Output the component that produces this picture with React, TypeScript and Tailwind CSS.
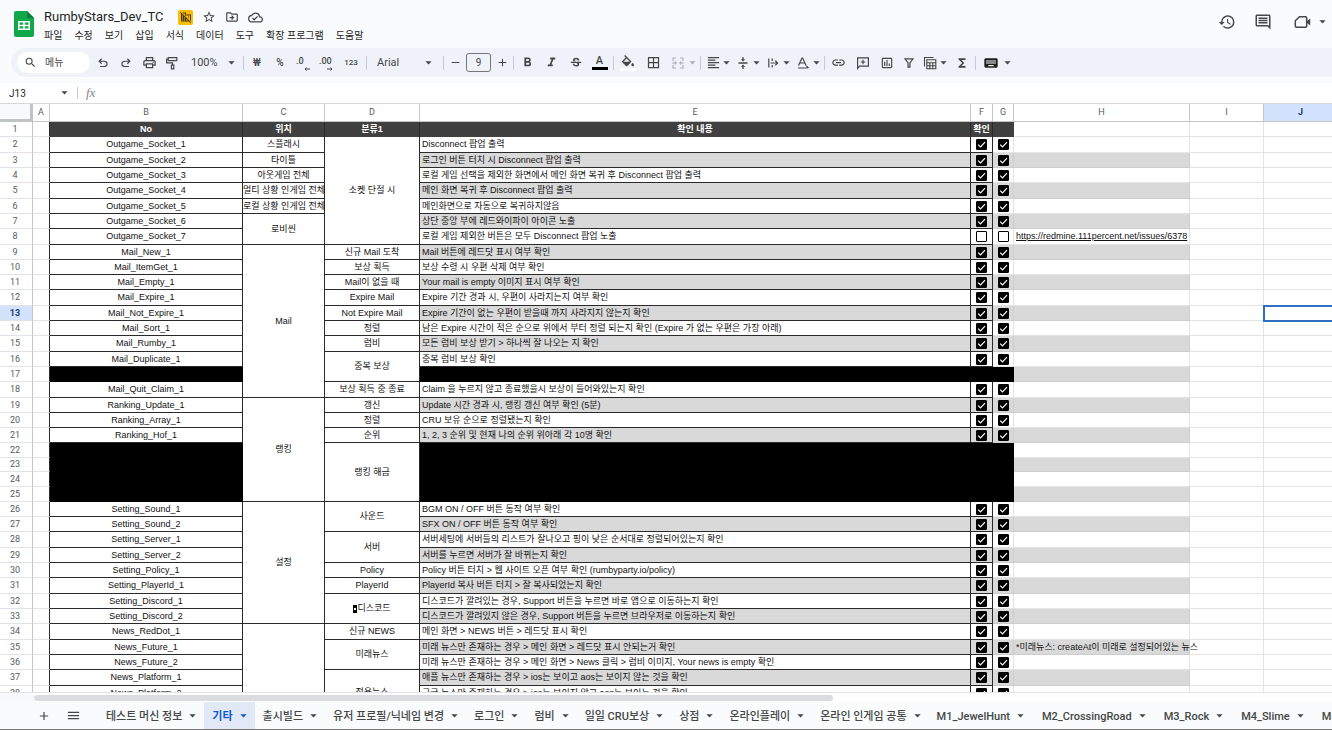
import React from "react";
import {
  MdAdd,
  MdBorderAll,
  MdDomainDisabled,
  MdFormatAlignLeft,
  MdFormatBold,
  MdFormatItalic,
  MdFunctions,
  MdHistory,
  MdKeyboard,
  MdLink,
  MdMenu,
  MdOutlineCloudDone,
  MdOutlineComment,
  MdOutlineDriveFileMove,
  MdOutlineInsertChart,
  MdOutlinePrint,
  MdRemove,
  MdSearch,
  MdStarBorder,
  MdStrikethroughS,
} from "react-icons/md";

type Merge = { text: string; span: number; marker?: boolean };
type Row = {
  n: number;
  id?: string;
  place?: Merge;
  kind?: Merge;
  detail?: string;
  hidden?: boolean;
  unchecked?: boolean;
  note?: string;
  link?: string;
};

const m = (text: string, span = 1): Merge => ({ text, span });

const rows: Row[] = [
  { n: 2, id: "Outgame_Socket_1", place: m("스플래시"), kind: m("소켓 단절 시", 7), detail: "Disconnect 팝업 출력" },
  { n: 3, id: "Outgame_Socket_2", place: m("타이틀"), detail: "로그인 버튼 터치 시 Disconnect 팝업 출력" },
  { n: 4, id: "Outgame_Socket_3", place: m("아웃게임 전체"), detail: "로컬 게임 선택을 제외한 화면에서 메인 화면 복귀 후 Disconnect 팝업 출력" },
  { n: 5, id: "Outgame_Socket_4", place: m("멀티 상황 인게임 전체"), detail: "메인 화면 복귀 후 Disconnect 팝업 출력" },
  { n: 6, id: "Outgame_Socket_5", place: m("로컬 상황 인게임 전체"), detail: "메인화면으로 자동으로 복귀하지않음" },
  { n: 7, id: "Outgame_Socket_6", place: m("로비씬", 2), detail: "상단 중앙 부에 레드와이파이 아이콘 노출" },
  { n: 8, id: "Outgame_Socket_7", detail: "로컬 게임 제외한 버튼은 모두 Disconnect 팝업 노출", unchecked: true, link: "https://redmine.111percent.net/issues/6378" },
  { n: 9, id: "Mail_New_1", place: m("Mail", 10), kind: m("신규 Mail 도착"), detail: "Mail 버튼에 레드닷 표시 여부 확인" },
  { n: 10, id: "Mail_ItemGet_1", kind: m("보상 획득"), detail: "보상 수령 시 우편 삭제 여부 확인" },
  { n: 11, id: "Mail_Empty_1", kind: m("Mail이 없을 때"), detail: "Your mail is empty 이미지 표시 여부 확인" },
  { n: 12, id: "Mail_Expire_1", kind: m("Expire Mail"), detail: "Expire 기간 경과 시, 우편이 사라지는지 여부 확인" },
  { n: 13, id: "Mail_Not_Expire_1", kind: m("Not Expire Mail"), detail: "Expire 기간이 없는 우편이 받을때 까지 사라지지 않는지 확인" },
  { n: 14, id: "Mail_Sort_1", kind: m("정렬"), detail: "남은 Expire 시간이 적은 순으로 위에서 부터 정렬 되는지 확인 (Expire 가 없는 우편은 가장 아래)" },
  { n: 15, id: "Mail_Rumby_1", kind: m("럼비"), detail: "모든 럼비 보상 받기 > 하나씩 잘 나오는 지 확인" },
  { n: 16, id: "Mail_Duplicate_1", kind: m("중복 보상", 2), detail: "중복 럼비 보상 확인" },
  { n: 17, hidden: true },
  { n: 18, id: "Mail_Quit_Claim_1", kind: m("보상 획득 중 종료"), detail: "Claim 을 누르지 않고 종료했을시 보상이 들어와있는지 확인" },
  { n: 19, id: "Ranking_Update_1", place: m("랭킹", 7), kind: m("갱신"), detail: "Update 시간 경과 시, 랭킹 갱신 여부 확인 (5분)" },
  { n: 20, id: "Ranking_Array_1", kind: m("정렬"), detail: "CRU 보유 순으로 정렬됐는지 확인" },
  { n: 21, id: "Ranking_Hof_1", kind: m("순위"), detail: "1, 2, 3 순위 및 현재 나의 순위 위아래 각 10명 확인" },
  { n: 22, hidden: true, kind: m("랭킹 해금", 4) },
  { n: 23, hidden: true },
  { n: 24, hidden: true },
  { n: 25, hidden: true },
  { n: 26, id: "Setting_Sound_1", place: m("설정", 8), kind: m("사운드", 2), detail: "BGM ON / OFF 버튼 동작 여부 확인" },
  { n: 27, id: "Setting_Sound_2", detail: "SFX ON / OFF 버튼 동작 여부 확인" },
  { n: 28, id: "Setting_Server_1", kind: m("서버", 2), detail: "서버세팅에 서버들의 리스트가 잘나오고 핑이 낮은 순서대로 정렬되어있는지 확인" },
  { n: 29, id: "Setting_Server_2", detail: "서버를 누르면 서버가 잘 바뀌는지 확인" },
  { n: 30, id: "Setting_Policy_1", kind: m("Policy"), detail: "Policy 버튼 터치 > 웹 사이트 오픈 여부 확인 (rumbyparty.io/policy)" },
  { n: 31, id: "Setting_PlayerId_1", kind: m("PlayerId"), detail: "PlayerId 복사 버튼 터치 > 잘 복사되었는지 확인" },
  { n: 32, id: "Setting_Discord_1", kind: { text: "디스코드", span: 2, marker: true }, detail: "디스코드가 깔려있는 경우, Support 버튼을 누르면 바로 앱으로 이동하는지 확인" },
  { n: 33, id: "Setting_Discord_2", detail: "디스코드가 깔려있지 않은 경우, Support 버튼을 누르면 브라우저로 이동하는지 확인" },
  { n: 34, id: "News_RedDot_1", place: m("", 6), kind: m("신규 NEWS"), detail: "메인 화면 > NEWS 버튼 > 레드닷 표시 확인" },
  { n: 35, id: "News_Future_1", kind: m("미래뉴스", 2), detail: "미래 뉴스만 존재하는 경우 > 메인 화면 > 레드닷 표시 안되는거 확인", note: "*미래뉴스: createAt이 미래로 설정되어있는 뉴스" },
  { n: 36, id: "News_Future_2", detail: "미래 뉴스만 존재하는 경우 > 메인 화면 > News 클릭 > 럼비 이미지, Your news is empty 확인" },
  { n: 37, id: "News_Platform_1", kind: m("전용뉴스", 3), detail: "애플 뉴스만 존재하는 경우 > ios는 보이고 aos는 보이지 않는 것을 확인" },
  { n: 38, id: "News_Platform_2", detail: "구글 뉴스만 존재하는 경우 > ios는 보이지 않고 aos는 보이는 것을 확인" },
  { n: 39 },
];

const tallRows = new Set([2, 5, 8, 12, 15, 18, 28, 31, 34, 37]);
const shortRows = new Set([23]);

const sheets = [
  "테스트 머신 정보",
  "기타",
  "출시빌드",
  "유저 프로필/닉네임 변경",
  "로그인",
  "럼비",
  "일일 CRU보상",
  "상점",
  "온라인플레이",
  "온라인 인게임 공통",
  "M1_JewelHunt",
  "M2_CrossingRoad",
  "M3_Rock",
  "M4_Slime",
  "M5",
];

const menus = ["파일", "수정", "보기", "삽입", "서식", "데이터", "도구", "확장 프로그램", "도움말"];

function Caret() {
  return (
    <svg viewBox="0 0 9 6" className="h-[6px] w-[9px] shrink-0 fill-current" aria-hidden="true">
      <path d="M1.4 1.2h6.2L4.5 4.6z" />
    </svg>
  );
}

function Tool({ label, width = "w-5", children }: { label: string; width?: string; children: React.ReactNode }) {
  return (
    <button type="button" aria-label={label} className={`flex h-5 shrink-0 items-center justify-center ${width}`}>
      {children}
    </button>
  );
}

function MenuTool({ label, width = "w-[18px]", faded, children }: { label: string; width?: string; faded?: boolean; children: React.ReactNode }) {
  return (
    <button type="button" aria-label={label} className={`flex h-5 shrink-0 items-center ${faded ? "text-[#b0b3b6]" : ""}`}>
      <span className={`flex justify-center ${width}`}>{children}</span>
      <Caret />
    </button>
  );
}

function Divider() {
  return <span className="h-[14px] w-px shrink-0 bg-[#c7cbd1]" />;
}

function UndoIcon({ flip }: { flip?: boolean }) {
  return (
    <svg viewBox="0 -960 960 960" className={`size-[14px] fill-current ${flip ? "-scale-x-100" : ""}`}>
      <path d="M280-200v-80h284q63 0 109.500-40T720-420q0-60-46.500-100T564-560H312l104 104-56 56-200-200 200-200 56 56-104 104h252q97 0 167 63t70 157q0 94-70 157t-167 63H280Z" />
    </svg>
  );
}

function Check({ label, off }: { label: string; off?: boolean }) {
  return (
    <span className="relative mx-auto block size-[11px]">
      <input
        type="checkbox"
        aria-label={label}
        defaultChecked={!off}
        className="peer block size-[11px] appearance-none rounded-[1px] border border-black bg-white checked:bg-black"
      />
      <svg viewBox="0 0 11 11" className="pointer-events-none absolute inset-0 hidden size-[11px] peer-checked:block">
        <path d="M2.200 5.600 4.500 7.900 9 3.200" fill="none" stroke="#fff" strokeWidth="1.200" />
      </svg>
    </span>
  );
}

function TitleBar() {
  return (
    <header className="flex h-12 shrink-0 items-start bg-[#f9fbfd] pt-[8px] pl-[14px] text-[#444746]">
      <svg viewBox="0 0 20 26" className="mt-[3px] h-[26px] w-5 shrink-0">
        <path d="M2 0h11l7 7v17a2 2 0 0 1-2 2H2a2 2 0 0 1-2-2V2a2 2 0 0 1 2-2z" fill="#11a84c" />
        <path d="M13 0l7 7h-7z" fill="#0b8038" />
        <path d="M4 10h12v9H4zM5.500 11.500v2.200h3.700v-2.200zm5.300 0v2.200h3.700v-2.200zM5.500 15.300v2.200h3.700v-2.200zm5.300 0v2.200h3.700v-2.200z" fill="#fff" fillRule="evenodd" />
      </svg>
      <div className="ml-[10px]">
        <div className="flex h-[18px] items-center">
          <h1 className="w-[134px] text-[13px] leading-[18px] text-[#1f1f1f]">RumbyStars_Dev_TC</h1>
          <span className="flex size-[15px] items-center justify-center rounded-[2px] bg-[#fbbc04] text-[#4a3a10]">
            <MdDomainDisabled size={12} />
          </span>
          <button type="button" aria-label="별표" className="ml-[9px]"><MdStarBorder size={14} /></button>
          <button type="button" aria-label="이동" className="ml-[9px]"><MdOutlineDriveFileMove size={14} /></button>
          <button type="button" aria-label="문서 상태" className="ml-[9px]"><MdOutlineCloudDone size={15} /></button>
        </div>
        <nav className="flex h-[18px] items-center gap-3 text-[10px] text-[#1f1f1f]">
          {menus.map((name) => (
            <button type="button" key={name} className="whitespace-nowrap">{name}</button>
          ))}
        </nav>
      </div>
      <div className="mt-[5px] ml-auto flex shrink-0 items-center pr-[5px]">
        <button type="button" aria-label="버전 기록"><MdHistory size={18} /></button>
        <button type="button" aria-label="댓글" className="ml-[18px]"><MdOutlineComment size={18} /></button>
        <button type="button" aria-label="화상 회의" className="ml-[22px] flex items-center gap-[6px]">
          <svg viewBox="0 0 18 14" className="h-[14px] w-[18px]">
            <path d="M5.500 1.700h6a1.200 1.200 0 0 1 1.200 1.200v8.200a1.200 1.200 0 0 1-1.200 1.200h-9a1.200 1.200 0 0 1-1.200-1.200V5.800z" fill="none" stroke="currentColor" strokeWidth="1.500" />
            <path d="M12.700 6.200 16.200 3.400v7.200l-3.500-2.800z" fill="currentColor" />
          </svg>
          <Caret />
        </button>
      </div>
    </header>
  );
}

function Toolbar() {
  return (
    <div className="shrink-0 bg-[#f9fbfd] pb-[6px] pl-[11px] text-[#444746]">
      <div className="flex h-[29px] items-center gap-[3px] overflow-hidden rounded-l-full bg-[#eff3f9] pl-[6px]">
        <label className="flex h-[21px] w-[73px] shrink-0 items-center gap-2 rounded-full bg-white pl-[7px]">
          <MdSearch size={13} className="shrink-0" />
          <input aria-label="메뉴 검색" placeholder="메뉴" className="w-10 bg-transparent text-[10px] outline-none placeholder:text-[#444746]" />
        </label>
        <Tool label="실행취소"><UndoIcon /></Tool>
        <Tool label="재실행"><UndoIcon flip /></Tool>
        <Tool label="인쇄"><MdOutlinePrint size={15} /></Tool>
        <Tool label="서식 복사">
          <svg viewBox="0 0 14 14" className="size-[14px]" fill="none" stroke="currentColor" strokeWidth="1.200">
            <path d="M3.200 1.600h8.600v3H3.200zM3.200 3H1.600v3.800h6v2.400M6.400 9.200h2.400v3.600H6.400z" />
          </svg>
        </Tool>
        <button type="button" className="flex h-5 w-[55px] shrink-0 items-center justify-between pr-1 pl-[6px] text-[11px]">
          <span className="pt-[2px]">100%</span> <Caret />
        </button>
        <Divider />
        <Tool label="통화 형식"><span className="text-[10px] font-medium">₩</span></Tool>
        <Tool label="퍼센트 형식"><span className="text-[10px] font-medium">%</span></Tool>
        <Tool label="소수점 이하 자릿수 감소">
          <span className="relative block h-4 w-[14px] text-left text-[9px] leading-[12px] font-medium">
            .0
            <svg viewBox="0 0 6 4" className="absolute right-0 bottom-0 h-1 w-[6px]" fill="none" stroke="currentColor"><path d="M6 2H1M2.500.5 1 2l1.500 1.500" /></svg>
          </span>
        </Tool>
        <Tool label="소수점 이하 자릿수 증가">
          <span className="relative block h-4 w-[14px] text-left text-[9px] leading-[12px] font-medium">
            .00
            <svg viewBox="0 0 6 4" className="absolute right-0 bottom-0 h-1 w-[6px]" fill="none" stroke="currentColor"><path d="M0 2h5M3.500.5 5 2 3.500 3.500" /></svg>
          </span>
        </Tool>
        <Tool label="서식 더보기" width="w-6"><span className="text-[8px] font-medium">123</span></Tool>
        <Divider />
        <button type="button" className="flex h-5 w-[70px] shrink-0 items-center justify-between px-[7px] text-[11px]">
          <span className="pt-[2px]">Arial</span> <Caret />
        </button>
        <Divider />
        <Tool label="글꼴 크기 축소" width="w-4"><MdRemove size={13} /></Tool>
        <input aria-label="글꼴 크기" defaultValue="9" className="h-[19px] w-[25px] shrink-0 rounded-[3px] border border-[#747775] bg-transparent text-center text-[10px]" />
        <Tool label="글꼴 크기 확대" width="w-4"><MdAdd size={13} /></Tool>
        <Divider />
        <Tool label="굵게" width="w-[21px]"><MdFormatBold size={15} /></Tool>
        <Tool label="기울임꼴" width="w-[21px]"><MdFormatItalic size={15} /></Tool>
        <Tool label="취소선" width="w-[21px]"><MdStrikethroughS size={14} /></Tool>
        <Tool label="텍스트 색상" width="w-[21px]">
          <span className="flex w-4 flex-col items-center text-[11px] leading-[11px] font-medium">
            A<span className="mt-px h-[3px] w-4 bg-black" />
          </span>
        </Tool>
        <Divider />
        <Tool label="채우기 색상" width="w-[21px]">
          <span className="flex w-4 flex-col items-center">
            <svg viewBox="0 0 24 18" className="h-3 w-4 fill-current">
              <path d="M16.560 8.940 7.620 0 6.210 1.410l2.380 2.380-5.150 5.150a1.490 1.490 0 0 0 0 2.120l5.500 5.500c.29.29.68.44 1.060.44s.77-.15 1.060-.44l5.500-5.500c.59-.58.59-1.530 0-2.120zM5.210 10 10 5.210 14.790 10zM19 11.500s-2 2.170-2 3.500c0 1.100.9 2 2 2s2-.9 2-2c0-1.330-2-3.500-2-3.500z" />
            </svg>
            <span className="mt-px h-[3px] w-4 bg-white" />
          </span>
        </Tool>
        <Tool label="테두리" width="w-6"><MdBorderAll size={15} /></Tool>
        <MenuTool label="셀 병합" width="w-5" faded>
          <svg viewBox="0 0 14 14" className="size-[14px]" fill="none" stroke="currentColor" strokeWidth="1.200">
            <path d="M5 2H2v3M9 2h3v3M2 9v3h3M12 9v3H9M1 7h4M3.700 5.500 5.200 7 3.700 8.500M13 7H9M10.300 5.500 8.800 7l1.500 1.500" />
          </svg>
        </MenuTool>
        <Divider />
        <MenuTool label="가로 정렬"><MdFormatAlignLeft size={15} /></MenuTool>
        <MenuTool label="세로 정렬">
          <svg viewBox="0 0 14 14" className="size-[14px]" fill="none" stroke="currentColor" strokeWidth="1.300">
            <path d="M2.500 7h9M7 1v3M7 13v-3" />
            <path d="M4.800 3.200h4.400L7 5.600zM4.800 10.800h4.400L7 8.400z" fill="currentColor" stroke="none" />
          </svg>
        </MenuTool>
        <MenuTool label="텍스트 줄바꿈">
          <svg viewBox="0 0 14 14" className="size-[14px]" fill="none" stroke="currentColor" strokeWidth="1.200">
            <path d="M2.800 2.500v9M6.200 2.500v2.500M6.200 9v2.500M4.500 7h7M9.300 4.700 11.600 7 9.300 9.300" />
          </svg>
        </MenuTool>
        <MenuTool label="텍스트 회전">
          <svg viewBox="0 0 14 14" className="size-[14px]" fill="none" stroke="currentColor" strokeWidth="1.200">
            <path d="M2.500 9.500 6 2h.6l3.500 7.500M3.700 7h5.200M2 12h9.500M12.500 12l-2-2" />
          </svg>
        </MenuTool>
        <Divider />
        <Tool label="링크 삽입" width="w-[21px]"><MdLink size={15} /></Tool>
        <Tool label="댓글 삽입" width="w-[21px]">
          <svg viewBox="0 0 14 14" className="size-[14px]" fill="none" stroke="currentColor" strokeWidth="1.200">
            <path d="M1.600 12.400V1.800h10.800v8.400H3.600zM7 3.700v4.600M4.700 6h4.600" />
          </svg>
        </Tool>
        <Tool label="차트 삽입" width="w-[21px]"><MdOutlineInsertChart size={14} /></Tool>
        <Tool label="필터" width="w-[18px]">
          <svg viewBox="0 0 14 14" className="size-[14px]" fill="none" stroke="currentColor" strokeWidth="1.200">
            <path d="M3 2.800h8L7.900 7v4.200H6.100V7z" />
          </svg>
        </Tool>
        <MenuTool label="필터 보기">
          <svg viewBox="0 0 14 14" className="size-[14px]" fill="none" stroke="currentColor" strokeWidth="1.100">
            <path d="M1.500 10.500v-9h9M3.800 3.800h9v9h-9zM3.800 6.700h9M3.800 9.700h9M6.800 6.700v6M9.800 6.700v6" />
          </svg>
        </MenuTool>
        <Tool label="함수" width="w-[21px]"><MdFunctions size={14} /></Tool>
        <Divider />
        <MenuTool label="입력 도구" width="w-6"><MdKeyboard size={16} className="text-[#1f1f1f]" /></MenuTool>
      </div>
    </div>
  );
}

function FormulaBar() {
  return (
    <div className="flex h-5 shrink-0 items-center bg-white text-[#444746]">
      <label className="flex w-[69px] items-center pl-[9px]">
        <input aria-label="이름 상자" defaultValue="J13" className="w-[51px] text-[10px] text-[#1f1f1f] outline-none" />
        <Caret />
      </label>
      <span className="ml-2 h-3 w-px bg-[#c7cbd1]" />
      <label htmlFor="formula" className="ml-2 font-['Liberation_Serif',serif] text-[13px] text-[#80868b] italic">fx</label>
      <input id="formula" className="ml-3 h-4 flex-1 text-[10px] outline-none" />
    </div>
  );
}

const columns: [string, string][] = [
  ["A", "w-[17px]"],
  ["B", "w-[193px]"],
  ["C", "w-[82px]"],
  ["D", "w-[95px]"],
  ["E", "w-[551px]"],
  ["F", "w-[22px]"],
  ["G", "w-[21px]"],
  ["H", "w-[176px]"],
  ["I", "w-[74px]"],
  ["J", ""],
];

const ink = "border-r border-b border-[#2a2a2a]";
const faint = "border-r border-b border-[#e3e4e6]";
const rowHead = "border-r border-b border-r-[#c4c7c5] border-b-[#e1e3e6] pr-[2px] font-['Roboto',sans-serif] text-[9px]";

function HeaderRow() {
  const dark = "border-r border-[#2a2a2a] bg-[#404040] font-bold text-white";
  return (
    <tr className="h-[15px]">
      <th scope="row" className={`${rowHead} font-normal text-[#575b5f]`}>1</th>
      <td className="border-r border-b border-r-[#2a2a2a] border-b-[#e3e4e6]" />
      <td className={dark}>No</td>
      <td className={dark}>위치</td>
      <td className={dark}>분류1</td>
      <td className={dark}>확인 내용</td>
      <td className={dark}>확인</td>
      <td className="bg-[#404040]" />
      <td className={faint} />
      <td className={faint} />
      <td className={faint} />
    </tr>
  );
}

function DataRow({ row }: { row: Row }) {
  const height = tallRows.has(row.n) ? "h-[16px]" : shortRows.has(row.n) ? "h-[14px]" : "h-[15px]";
  const shaded = row.n % 2 === 1;
  const selected = row.n === 13;
  const tone = shaded ? "bg-[#d9d9d9]" : "bg-white";
  const edge = shaded ? "border-[#cdcdcd]" : "border-[#e3e4e6]";
  return (
    <tr className={height}>
      <th scope="row" className={`${rowHead} ${selected ? "bg-[#d3e3fd] font-bold text-[#1b3f7a]" : "font-normal text-[#575b5f]"}`}>{row.n}</th>
      <td className="border-r border-b border-r-[#2a2a2a] border-b-[#e3e4e6]" />
      <td className={row.hidden ? "border-r border-b border-black bg-black" : ink}>{row.id}</td>
      {row.place && <td rowSpan={row.place.span} className={ink}>{row.place.text}</td>}
      {row.kind && (
        <td rowSpan={row.kind.span} className={ink}>
          {row.kind.marker && (
            <span className="inline-flex h-2 w-1 items-center justify-center bg-black align-middle">
              <span className="size-[2px] bg-white" />
            </span>
          )}
          {row.kind.text}
        </td>
      )}
      {row.hidden ? (
        <td colSpan={3} className="bg-black" />
      ) : (
        <>
          <td className={`${ink} ${tone} pl-[2px] text-left`}>{row.detail}</td>
          <td className={`${ink} ${tone}`}><Check label={`${row.id ?? row.n} 확인 1`} off={row.unchecked} /></td>
          <td className={`border-r border-b ${edge} ${tone}`}><Check label={`${row.id ?? row.n} 확인 2`} off={row.unchecked} /></td>
        </>
      )}
      <td className={`border-r border-b ${edge} ${tone} pl-[2px] text-left`}>
        {row.link ? <a href={row.link} className="underline">{row.link}</a> : row.note}
      </td>
      <td className={faint} />
      <td className={selected ? "border-r border-b border-[#e3e4e6] outline-2 -outline-offset-1 outline-[#2f6fbf]" : faint} />
    </tr>
  );
}

function Sheet() {
  return (
    <main className="min-h-0 flex-1 overflow-hidden border-t border-[#d5d7da]">
      <table className="w-full min-w-[1338px] table-fixed border-separate border-spacing-0 text-center font-['Liberation_Sans','Noto_Sans_CJK_KR',sans-serif] text-[9px] leading-[13px] whitespace-nowrap text-[#111] [&_td]:py-0 [&_th]:py-0">
        <thead>
          <tr className="h-[18px] font-['Roboto',sans-serif] text-[9px] text-[#575b5f]">
            <th className="w-[33px] border-r-[3px] border-b-[3px] border-[#c0c3c6] bg-[#f8f9fa]" aria-label="전체 선택" />
            {columns.map(([name, width]) => (
              <th
                key={name}
                scope="col"
                className={`${width} border-r border-b border-[#c4c7c5] ${name === "J" ? "bg-[#d3e3fd] font-bold text-[#1b3f7a]" : "font-normal"}`}
              >
                {name}
              </th>
            ))}
          </tr>
        </thead>
        <tbody>
          <HeaderRow />
          {rows.map((row) => (
            <DataRow key={row.n} row={row} />
          ))}
        </tbody>
      </table>
    </main>
  );
}

function SheetTabs() {
  return (
    <footer className="flex h-7 shrink-0 items-stretch overflow-hidden border-b border-[#777] bg-[#f9fbfd] pl-9 text-[11px] font-medium text-[#444746]">
      <button type="button" aria-label="시트 추가" className="flex w-4 shrink-0 items-center justify-center"><MdAdd size={14} /></button>
      <button type="button" aria-label="모든 시트" className="mr-[17px] ml-[13px] flex w-4 shrink-0 items-center justify-center"><MdMenu size={15} /></button>
      {sheets.map((name) => (
        <button
          type="button"
          key={name}
          className={`flex shrink-0 items-center gap-[6px] pl-2 whitespace-nowrap ${name.startsWith("M") ? "pr-[9px]" : "pr-[7px]"} ${name === "기타" ? "bg-[#e1e9f7] font-bold text-[#0b57d0]" : ""}`}
        >
          <span className="pt-[3px]">{name}</span>
          <Caret />
        </button>
      ))}
    </footer>
  );
}

export default function App() {
  return (
    <div className="flex h-screen flex-col overflow-hidden bg-white font-['Roboto','Noto_Sans_CJK_KR',sans-serif]">
      <TitleBar />
      <Toolbar />
      <FormulaBar />
      <Sheet />
      <div className="flex h-[10px] shrink-0 items-center border-t border-[#e1e3e6] bg-white">
        <span className="h-full w-[34px] bg-[#f8f9fa]" />
        <span className="h-[6px] w-3/5 rounded-full bg-[#dadce0]" />
      </div>
      <SheetTabs />
    </div>
  );
}
